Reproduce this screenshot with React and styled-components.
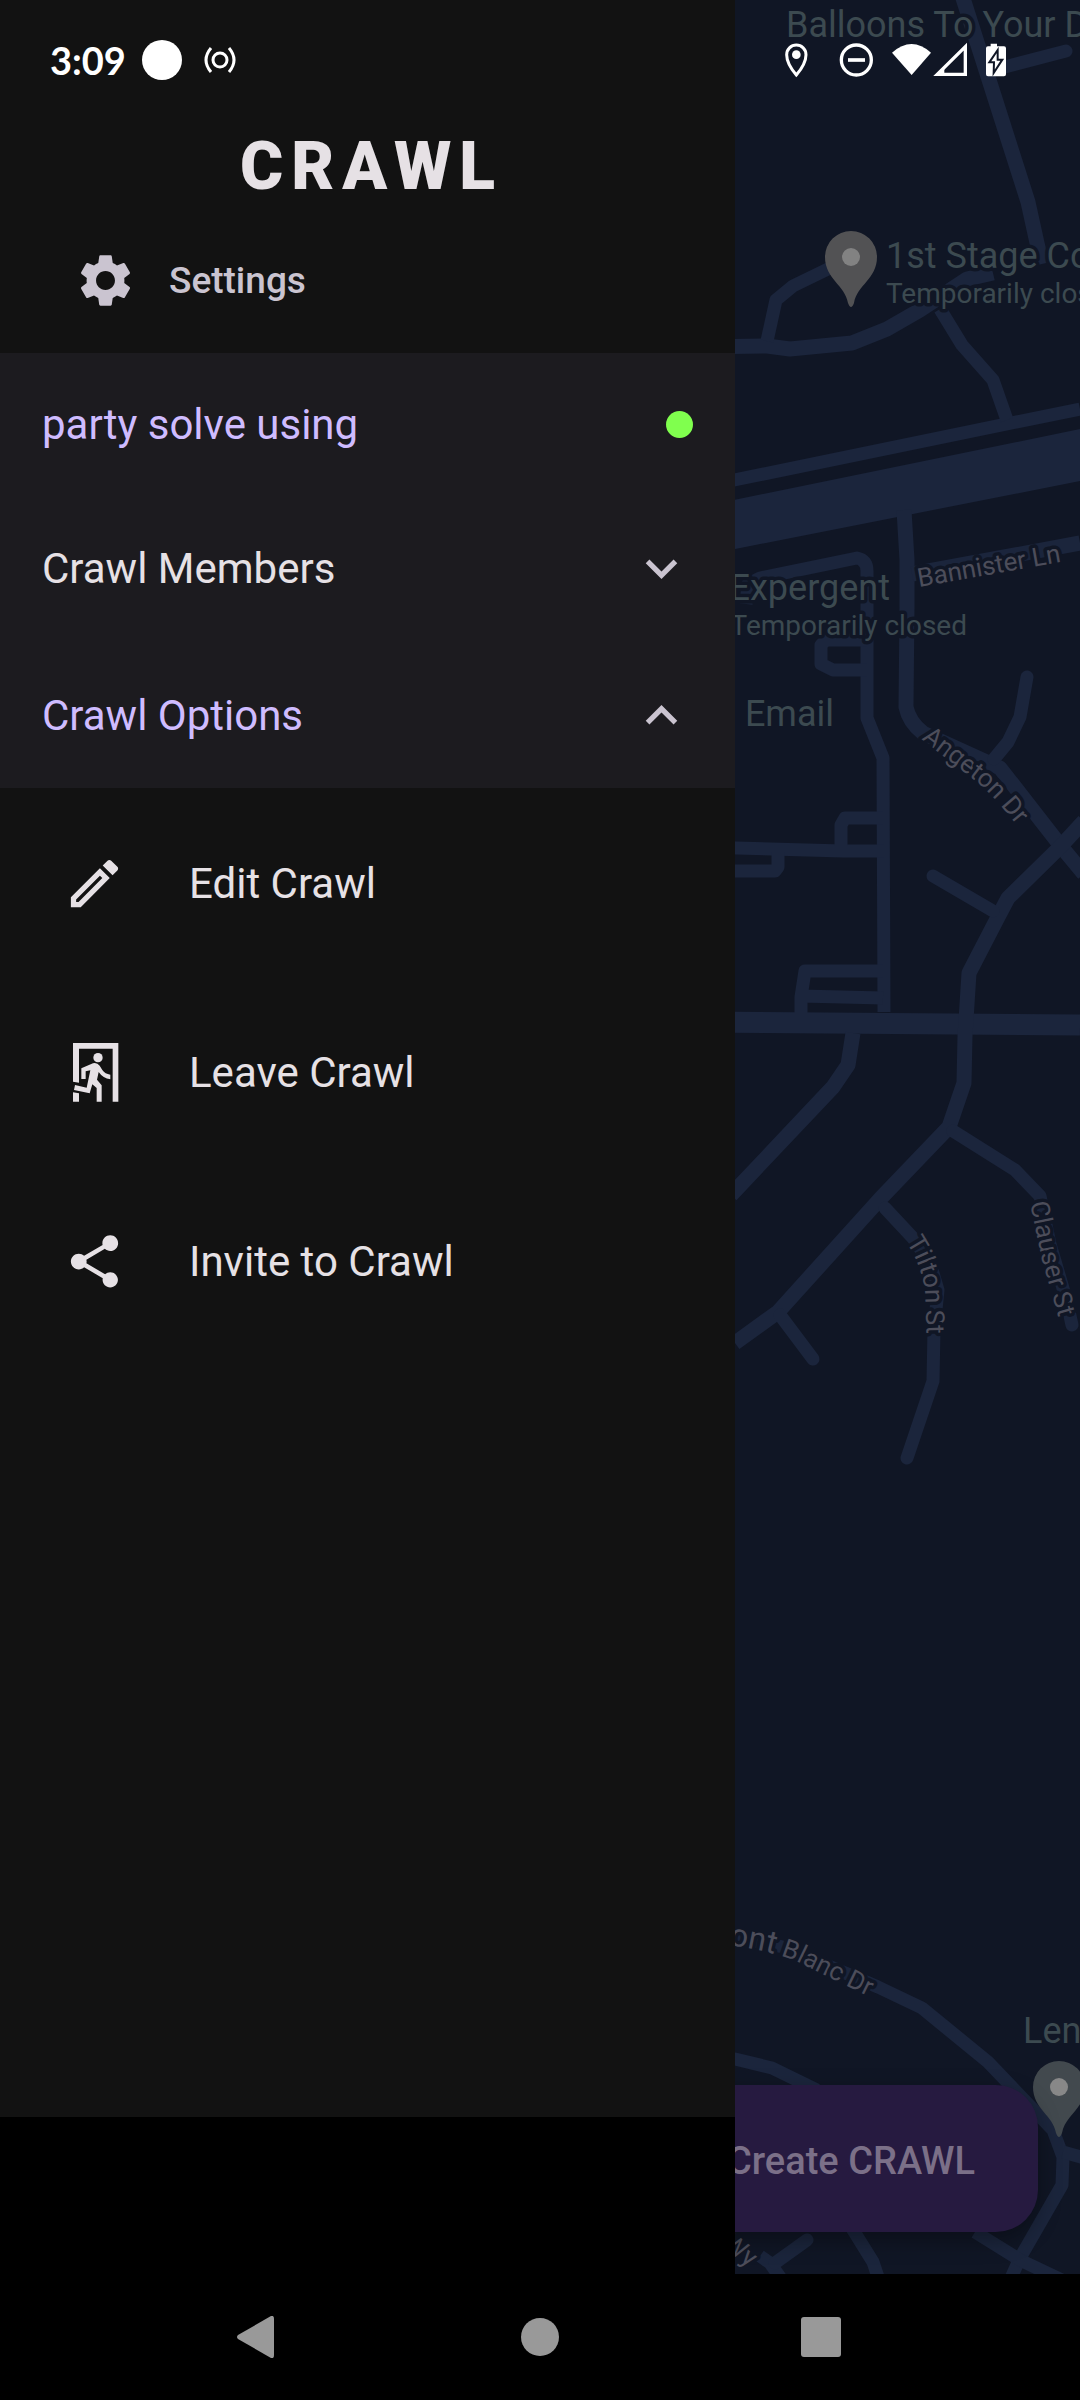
import { useState } from "react";
import styled, { createGlobalStyle } from "styled-components";

const GlobalStyle = createGlobalStyle`
    *, *::before, *::after {
        box-sizing: border-box;
    }
    body {
        margin: 0;
        background: #000;
        font-family: Roboto, "Liberation Sans", sans-serif;
    }
    button {
        font-family: inherit;
        border: 0;
        background: none;
        padding: 0;
        cursor: pointer;
    }
    svg {
        display: block;
        flex: none;
    }
`;

const Screen = styled.div`
    min-height: 100vh;
    display: flex;
    flex-direction: column;
    background: #000;
    position: relative;
    overflow: hidden;
`;

const StatusBar = styled.header`
    position: absolute;
    top: 0;
    left: 0;
    right: 0;
    height: 120px;
    padding: 0 72px 0 50px;
    display: flex;
    align-items: center;
    justify-content: space-between;
    color: #fff;
    z-index: 2;
`;

const StatusGroup = styled.div`
    display: flex;
    align-items: center;
`;

const Clock = styled.time`
    font-family: Lato, Roboto, sans-serif;
    font-size: 38px;
    font-weight: 700;
    line-height: 40px;
`;

const Notice = styled.span`
    width: 40px;
    height: 40px;
    margin: 0 20px 0 16px;
    border-radius: 50%;
    background: #fff;
`;

const Stage = styled.div`
    flex: 1;
    display: flex;
    position: relative;
    background: #101625;
`;

const MapDrawing = styled.svg`
    position: absolute;
    inset: 0;
    width: 100%;
    height: 100%;
`;

const Roads = styled.g`
    fill: none;
    stroke: #1b253c;
    stroke-width: ${props => props.$width}px;
    stroke-linejoin: round;
    stroke-linecap: ${props => props.$cap || "butt"};
`;

const MapLabel = styled.text`
    font-size: ${props => (props.$small ? 28 : 36)}px;
    fill: #3c4a50;
    stroke: #101625;
    stroke-width: 7px;
    stroke-linejoin: round;
    paint-order: stroke;
`;

const StreetLabel = styled(MapLabel)`
    font-size: 26px;
    fill: #4c4d5a;
`;

const WideWord = styled.tspan`
    font-size: 32px;
`;

const Drawer = styled.nav`
    position: relative;
    z-index: 1;
    width: 735px;
    max-width: 85%;
    flex: none;
    display: flex;
    flex-direction: column;
    padding-bottom: 157px;
    background: #000;
`;

const DrawerBody = styled.div`
    flex: 1;
    background: #121212;
`;

const Brand = styled.h1`
    margin: 0;
    padding: 128px 0 0 8px;
    font-size: 66px;
    line-height: 78px;
    font-weight: 900;
    letter-spacing: 8px;
    text-align: center;
    color: #e6e1e5;
`;

const SettingsButton = styled.button`
    display: flex;
    align-items: center;
    gap: 32px;
    width: 100%;
    height: 147px;
    padding: 2px 74px 0;
    font-size: 37px;
    font-weight: 500;
    color: #cac4d0;
`;

const Panel = styled.section`
    background: #1c1b1f;
`;

const PanelRow = styled.div`
    display: flex;
    align-items: center;
    justify-content: space-between;
    width: 100%;
    height: 141px;
    padding: 2px 42px 0;
    font-size: 42px;
    font-weight: 400;
    color: ${props => (props.$active ? "#cfbcff" : "#e6e1e5")};
`;

const PanelButton = styled(PanelRow)`
    height: 147px;
    svg {
        color: #cac4d0;
    }
`;

const OnlineDot = styled.span`
    width: 27px;
    height: 27px;
    border-radius: 50%;
    background: #80ff4e;
`;

const OptionList = styled.ul`
    list-style: none;
    margin: 0;
    padding: 0;
`;

const Option = styled.button`
    display: flex;
    align-items: center;
    gap: 63px;
    width: 100%;
    height: 189px;
    padding: 2px 63px 0;
    font-size: 42px;
    color: #e6e1e5;
`;

const MapSide = styled.main`
    flex: 1;
    display: flex;
    align-items: flex-end;
    justify-content: flex-end;
    padding: 42px;
    position: relative;
    min-width: 0;
`;

const CreateButton = styled.button`
    flex: none;
    height: 147px;
    padding: 4px 63px 0 116px;
    border-radius: 42px;
    background: #261a40;
    box-shadow: 0 8px 22px rgba(0, 0, 0, 0.35);
    font-size: 38px;
    font-weight: 500;
    white-space: nowrap;
    color: #7b7088;
`;

const SystemNav = styled.footer`
    height: 126px;
    padding: 0 237px;
    display: flex;
    align-items: center;
    justify-content: space-between;
    color: #999;
`;

const NavButton = styled.button`
    color: inherit;
`;

const Icon = ({ size = 63, d }) => (
    <svg width={size} height={size} viewBox="0 0 24 24" fill="currentColor" aria-hidden="true">
        <path d={d} />
    </svg>
);

const gear = "M19.14 12.94c.04-.3.06-.61.06-.94 0-.32-.02-.64-.07-.94l2.03-1.58c.18-.14.23-.41.12-.61l-1.92-3.32c-.12-.22-.37-.29-.59-.22l-2.39.96c-.5-.38-1.03-.7-1.62-.94l-.36-2.54c-.04-.24-.24-.41-.48-.41h-3.84c-.24 0-.43.17-.47.41l-.36 2.54c-.59.24-1.13.57-1.62.94l-2.39-.96c-.22-.08-.47 0-.59.22L2.74 8.87c-.12.21-.08.47.12.61l2.03 1.58c-.05.3-.09.63-.09.94s.02.64.07.94l-2.03 1.58c-.18.14-.23.41-.12.61l1.92 3.32c.12.22.37.29.59.22l2.39-.96c.5.38 1.03.7 1.62.94l.36 2.54c.05.24.24.41.48.41h3.84c.24 0 .44-.17.47-.41l.36-2.54c.59-.24 1.13-.56 1.62-.94l2.39.96c.22.08.47 0 .59-.22l1.92-3.32c.12-.22.07-.47-.12-.61l-2.01-1.58zM12 15.6c-1.98 0-3.6-1.62-3.6-3.6s1.62-3.6 3.6-3.6 3.6 1.62 3.6 3.6-1.62 3.6-3.6 3.6z";
const pencil = "M14.06 9.02l.92.92L5.92 19H5v-.92l9.06-9.06M17.66 3c-.25 0-.51.1-.7.29l-1.83 1.83 3.75 3.75 1.83-1.83c.39-.39.39-1.02 0-1.41l-2.34-2.34c-.2-.2-.45-.29-.71-.29zm-3.6 3.19L3 17.25V21h3.75L17.81 9.94l-3.75-3.75z";
const share = "M18 16.08c-.76 0-1.44.3-1.96.77L8.91 12.7c.05-.23.09-.46.09-.7s-.04-.47-.09-.7l7.05-4.11c.54.5 1.25.81 2.04.81 1.66 0 3-1.34 3-3s-1.34-3-3-3-3 1.34-3 3c0 .24.04.47.09.7L8.04 9.81C7.5 9.31 6.79 9 6 9c-1.66 0-3 1.34-3 3s1.34 3 3 3c.79 0 1.5-.31 2.04-.81l7.12 4.16c-.05.21-.08.43-.08.65 0 1.61 1.31 2.92 2.92 2.92s2.92-1.31 2.92-2.92-1.31-2.92-2.92-2.92z";
const chevronDown = "M16.59 8.59L12 13.17 7.41 8.59 6 10l6 6 6-6z";
const chevronUp = "M12 8l-6 6 1.41 1.41L12 10.83l4.59 4.58L18 14z";

const LeaveIcon = () => (
    <svg width="63" height="63" viewBox="9 30 189 189" fill="currentColor" aria-hidden="true">
        <path d="M39 36H175V212H158V53H57V155L39 152Z" />
        <path d="M39 184L57 187V212H39Z" />
        <circle cx="114" cy="80" r="14" />
        <path d="M64 112V144H77V121L91 118L80 170L45 162L42 177L89 187L97 160L110 171V212H125V163L111 146L116 123Q129 142 151 145V131Q135 129 127 117L119 104Q111 94 99 97Z" />
    </svg>
);

const options = [
    { name: "Edit Crawl", icon: <Icon d={pencil} /> },
    { name: "Leave Crawl", icon: <LeaveIcon /> },
    { name: "Invite to Crawl", icon: <Icon d={share} /> },
];

const Pin = ({ x, y, fill, dot }) => (
    <g transform={`translate(${x} ${y})`}>
        <path d="M0 -26A26 26 0 0 0 -26 0C-26 22 -6 28 -3 46Q0 54 3 46C6 28 26 22 26 0A26 26 0 0 0 0 -26Z" fill={fill} />
        <circle r="9" fill={dot} />
    </g>
);

function CityMap() {
    return (
        <MapDrawing viewBox="0 0 1080 2274" preserveAspectRatio="xMaxYMin slice">
            <defs>
                <path id="angeton" d="M921 739Q955 765 977 782Q1000 802 1030 842" />
                <path id="tilton" d="M906 1242Q920 1262 925 1290L927 1350" />
                <path id="clauser" d="M1030 1203L1042 1260L1066 1344" />
                <path id="blanc" d="M701 1941L735 1946Q780 1953 800 1963L900 2012" />
            </defs>
            <path fill="#1b253c" d="M700 507L1080 429V481L700 556Z" />
            <Roads $width={21}>
                <path d="M700 1022L1080 1025" />
            </Roads>
            <Roads $width={15}>
                <path d="M961 -8L1028 202L1037 243L1042 264" />
                <path d="M700 347L767 346L790 349L852 343L887 329L920 310L967 279L993 273" />
                <path d="M904 510L907 560V607L906 707Q909 722 923 733L1000 768L1060 845L1084 874" />
                <path d="M912 574L1080 543" />
                <path d="M1084 821L1060 847L1008 898L998 917L969 973L965 1036L964 1083L949 1127L880 1199L778 1312L735 1343" />
                <path d="M853 1033L848 1065L833 1087L731 1195" />
            </Roads>
            <Roads $width={13}>
                <path d="M700 487L1080 409" />
                <path d="M767 341L776 300L793 286L830 268" />
                <path d="M940 309L962 345L993 380L1007 420" />
                <path d="M746 604L748 584L760 578L857 558Q867 560 867 571V718L883 758L884 1012" />
                <path d="M867 640H826L821 645V664L833 670H867" />
                <path d="M700 847L843 851H884" />
                <path d="M841 846V825L845 818H883" />
                <path d="M700 871H775L778 867V852" />
                <path d="M883 971H805L801 997V1013M801 996L883 998" />
                <path d="M720 1934L783 1947L850 1975L878 1987L922 2008L988 2062L1053 2130L1063 2157L1062 2185L1020 2258L1011 2278" />
                <path d="M1063 2152L1084 2158" />
                <path d="M720 2056L735 2059L772 2068L817 2090M850 2225L873 2262L879 2280" />
                <path d="M760 2256L770 2263L782 2280" />
                <path d="M975 2232L1020 2260L1066 2282" />
            </Roads>
            <Roads $width={13} $cap="round">
                <path d="M993 70L1066 51" />
                <path d="M1027 677L1020 717L1008 742L994 759" />
                <path d="M933 876L993 911" />
                <path d="M953 1131L1015 1170L1040 1196L1050 1244L1067 1302L1072 1325" />
                <path d="M885 1208L913 1238L930 1263L938 1290L934 1329L933 1381L907 1458" />
                <path d="M780 1315L813 1359" />
                <path d="M775 2263L807 2240" />
            </Roads>
            <MapLabel x="786" y="37">Balloons To Your D</MapLabel>
            <MapLabel x="886" y="268">1st Stage Co</MapLabel>
            <MapLabel x="886" y="303" $small>Temporarily clos</MapLabel>
            <MapLabel x="890" y="600" textAnchor="end">Expergent</MapLabel>
            <MapLabel x="967" y="635" textAnchor="end" $small>Temporarily closed</MapLabel>
            <MapLabel x="834" y="726" textAnchor="end">. Email</MapLabel>
            <MapLabel x="1023" y="2043">Len</MapLabel>
            <StreetLabel transform="translate(919 587) rotate(-10)">Bannister Ln</StreetLabel>
            <StreetLabel><textPath href="#angeton">Angeton Dr</textPath></StreetLabel>
            <StreetLabel><textPath href="#tilton">Tilton St</textPath></StreetLabel>
            <StreetLabel><textPath href="#clauser">Clauser St</textPath></StreetLabel>
            <StreetLabel><textPath href="#blanc"><WideWord>Mont</WideWord> Blanc Dr</textPath></StreetLabel>
            <StreetLabel transform="translate(721 2246) rotate(38)">Wy</StreetLabel>
            <Pin x={851} y={257} fill="#525254" dot="#828282" />
            <Pin x={1059} y={2087} fill="#42494e" dot="#888888" />
        </MapDrawing>
    );
}

function StatusIcons() {
    return (
        <svg width="223" height="36" viewBox="0 0 669 108" aria-hidden="true">
            <g fill="none" stroke="#fff">
                <path strokeWidth="9" d="M34 99C18 80 5 59 5 38A29 29 0 0 1 63 38C63 59 50 80 34 99Z" />
                <circle cx="214" cy="54" r="45" strokeWidth="10" />
                <path strokeWidth="11" d="M189 54H240" />
                <path strokeWidth="10" d="M457 97H541V14Z" />
            </g>
            <circle cx="34" cy="38" r="13" fill="#fff" />
            <path fill="#fff" d="M321 32Q380 -20 438 32L380 99Z" />
            <path fill="#fff" d="M449 101L478 74V101Z" />
            <path fill="#fff" d="M617 5H636V13H657Q663 13 663 19V97Q663 103 657 103H609Q603 103 603 97V19Q603 13 609 13H617Z" />
            <path fill="#fff" stroke="#101625" strokeWidth="6" d="M638 24L613 61H627L626 93L652 53H638Z" />
        </svg>
    );
}

function App() {
    const [open, setOpen] = useState({ members: false, options: true });

    return (
        <Screen>
            <GlobalStyle />
            <StatusBar>
                <StatusGroup>
                    <Clock>3:09</Clock>
                    <Notice />
                    <svg width="36" height="36" viewBox="0 0 36 36" fill="none" stroke="#fff" aria-hidden="true">
                        <circle cx="18" cy="18" r="7" strokeWidth="3" />
                        <path strokeWidth="3" d="M9 6Q-1 18 9 30M27 6Q37 18 27 30" />
                    </svg>
                </StatusGroup>
                <StatusIcons />
            </StatusBar>
            <Stage>
                <CityMap />
                <Drawer>
                    <DrawerBody>
                        <Brand>CRAWL</Brand>
                        <SettingsButton>
                            <Icon d={gear} />
                            Settings
                        </SettingsButton>
                        <Panel>
                            <PanelRow $active>
                                party solve using
                                <OnlineDot />
                            </PanelRow>
                            <PanelButton
                                as="button"
                                $active={open.members}
                                aria-expanded={open.members}
                                onClick={() => setOpen({ ...open, members: !open.members })}
                            >
                                Crawl Members
                                <Icon d={open.members ? chevronUp : chevronDown} />
                            </PanelButton>
                            <PanelButton
                                as="button"
                                $active={open.options}
                                aria-expanded={open.options}
                                onClick={() => setOpen({ ...open, options: !open.options })}
                            >
                                Crawl Options
                                <Icon d={open.options ? chevronUp : chevronDown} />
                            </PanelButton>
                        </Panel>
                        {open.options && (
                            <OptionList>
                                {options.map(option => (
                                    <li key={option.name}>
                                        <Option>
                                            {option.icon}
                                            {option.name}
                                        </Option>
                                    </li>
                                ))}
                            </OptionList>
                        )}
                    </DrawerBody>
                </Drawer>
                <MapSide>
                    <CreateButton>Create CRAWL</CreateButton>
                </MapSide>
            </Stage>
            <SystemNav>
                <NavButton aria-label="Back">
                    <svg width="42" height="42" viewBox="0 0 42 42" fill="currentColor">
                        <path d="M34 0Q37 -1 37 3V39Q37 43 34 42L1 23Q-1 21 1 19Z" />
                    </svg>
                </NavButton>
                <NavButton aria-label="Home">
                    <svg width="42" height="42" viewBox="0 0 42 42" fill="currentColor">
                        <circle cx="21" cy="21" r="19" />
                    </svg>
                </NavButton>
                <NavButton aria-label="Recent apps">
                    <svg width="42" height="42" viewBox="0 0 42 42" fill="currentColor">
                        <rect x="0" y="1" width="40" height="40" rx="3" />
                    </svg>
                </NavButton>
            </SystemNav>
        </Screen>
    );
}

export default App;
